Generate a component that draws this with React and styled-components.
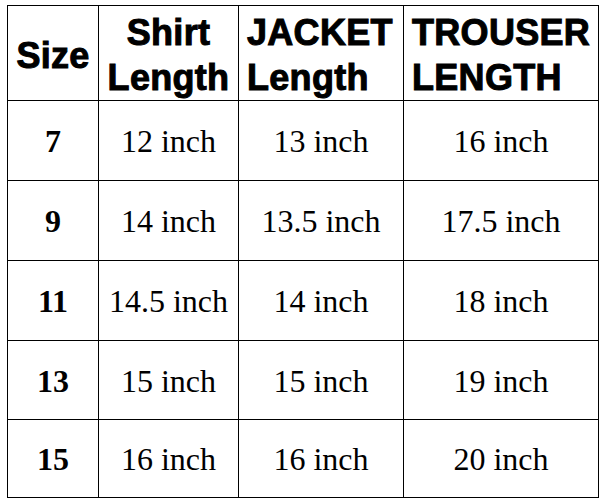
import React from "react";
import styled, { createGlobalStyle } from "styled-components";

const GlobalStyle = createGlobalStyle`
  html, body {
    margin: 0;
    padding: 0;
    background: #fff;
  }
`;

const Page = styled.div`
  padding: 5px 0 0 7px;
`;

const Table = styled.table`
  width: 591px;
  table-layout: fixed;
  border-collapse: collapse;
  color: #000;
`;

const HeadRow = styled.tr`
  height: 95px;
`;

const BodyRow = styled.tr`
  height: ${(p) => p.$h}px;
`;

const HeadCell = styled.th`
  border: 1px solid #000;
  height: 90px;
  box-sizing: border-box;
  padding: 4px 0 0 ${(p) => (p.$align === "left" ? "8px" : "0")};
  text-align: ${(p) => p.$align || "center"};
  vertical-align: middle;
  font-family: "Liberation Sans", Arial, sans-serif;
  font-weight: 700;
  font-size: 36px;
  line-height: 45px;
  letter-spacing: 0.3px;
  -webkit-text-stroke: 1px #000;
  white-space: nowrap;
`;

const Cell = styled.td`
  border: 1px solid #000;
  padding: 2px 0 0;
  text-align: center;
  vertical-align: middle;
  font-family: "Liberation Serif", "Times New Roman", serif;
  font-size: 32px;
  font-weight: ${(p) => (p.$bold ? 700 : 400)};
  white-space: nowrap;
`;

const rows = [
  ["7", "12 inch", "13 inch", "16 inch"],
  ["9", "14 inch", "13.5 inch", "17.5 inch"],
  ["11", "14.5 inch", "14 inch", "18 inch"],
  ["13", "15 inch", "15 inch", "19 inch"],
  ["15", "16 inch", "16 inch", "20 inch"],
];

const heights = [80, 80, 80, 79, 78];

export default function App() {
  return (
    <Page>
      <GlobalStyle />
      <Table>
        <colgroup>
          <col style={{ width: 91 }} />
          <col style={{ width: 140 }} />
          <col style={{ width: 165 }} />
          <col style={{ width: 195 }} />
        </colgroup>
        <thead>
          <HeadRow>
            <HeadCell>Size</HeadCell>
            <HeadCell>
              Shirt
              <br />
              Length
            </HeadCell>
            <HeadCell $align="left">
              JACKET
              <br />
              Length
            </HeadCell>
            <HeadCell $align="left">
              TROUSER
              <br />
              LENGTH
            </HeadCell>
          </HeadRow>
        </thead>
        <tbody>
          {rows.map((r, i) => (
            <BodyRow key={r[0]} $h={heights[i]}>
              <Cell $bold>{r[0]}</Cell>
              <Cell>{r[1]}</Cell>
              <Cell>{r[2]}</Cell>
              <Cell>{r[3]}</Cell>
            </BodyRow>
          ))}
        </tbody>
      </Table>
    </Page>
  );
}
